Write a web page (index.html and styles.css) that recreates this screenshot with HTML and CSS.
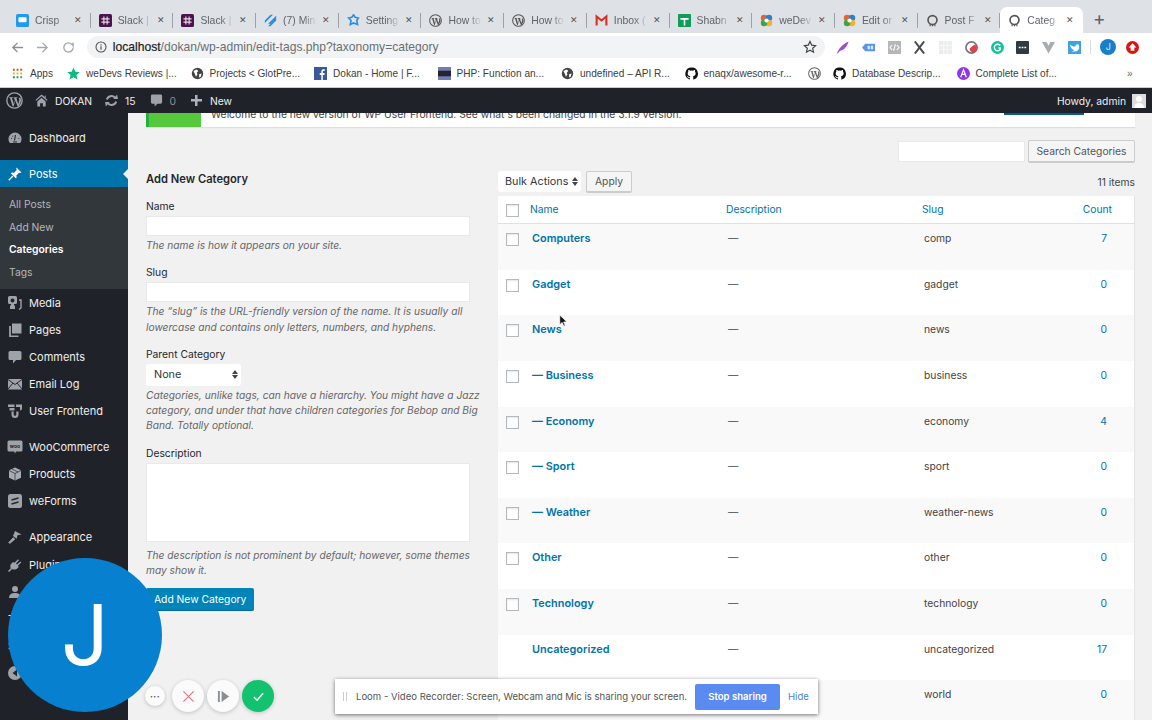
FILE: index.html
```html
<!DOCTYPE html>
<html lang="en">
   <head>
      <meta charset="UTF-8">
      <meta name="viewport" content="width=device-width, initial-scale=1.0">
      <title>Categories</title>
      <link rel="stylesheet" href="styles.css">
   </head>
   <body>
      <svg class="defs" xmlns="http://www.w3.org/2000/svg">
         <symbol id="wp" viewBox="0 0 20 20">
            <circle cx="10" cy="10" r="9" fill="none" stroke="currentColor" stroke-width="1.6"/>
            <path d="M3.800 6.200h4.200v.9H7l2.200 6.900 1.300-4-1-2.900H8.800v-.9h4.400v.9h-1l2.200 6.900 1-3.400c.5-1.600.2-2.700-.6-3.800h2.200c1.200 2.600.6 4.400-.2 6.500L14.600 17h-1l-2.500-6.700L8.800 17h-1L4.700 7.100H3.800z" fill="currentColor"/>
         </symbol>
         <symbol id="ring" viewBox="0 0 16 16">
            <circle cx="8" cy="7.500" r="5.500" fill="none" stroke="#555" stroke-width="2"/>
            <path d="M5 12.500v2.500M8 12.500v2.500M11 12.500v2.500" stroke="#555" stroke-width="1.400"/>
         </symbol>
         <symbol id="slack" viewBox="0 0 16 16">
            <rect width="16" height="16" rx="2" fill="#4a154b"/>
            <path d="M3 6h10M3 10h10M6 3v10M10 3v10" stroke="#e8d8e8" stroke-width="1.400"/>
         </symbol>
         <symbol id="wedevs" viewBox="0 0 16 16">
            <circle cx="5" cy="5" r="4" fill="#e8642c"/>
            <circle cx="11" cy="5" r="4" fill="#2f7fd1"/>
            <circle cx="11" cy="11" r="4" fill="#f0b429"/>
            <circle cx="5" cy="11" r="4" fill="#3fa34d"/>
            <circle cx="8" cy="8" r="2.600" fill="#fff"/>
         </symbol>
         <symbol id="github" viewBox="0 0 16 16">
            <path d="M8 .6a7.6 7.6 0 0 0-2.400 14.800c.4.100.5-.2.5-.4v-1.400c-2.100.5-2.600-.9-2.600-.9-.3-.9-.8-1.100-.8-1.100-.7-.5.100-.5.100-.5.8.100 1.200.8 1.200.8.700 1.200 1.800.8 2.200.6.100-.5.300-.8.500-1-1.700-.2-3.400-.8-3.400-3.700 0-.8.300-1.500.8-2-.1-.2-.3-1 .1-2 0 0 .6-.2 2.100.8a7 7 0 0 1 3.800 0c1.500-1 2.100-.8 2.100-.8.400 1 .2 1.800.1 2 .5.500.8 1.200.8 2 0 2.900-1.800 3.500-3.400 3.700.300.200.500.700.500 1.400V15c0 .2.100.5.500.4A7.600 7.600 0 0 0 8 .6z" fill="#111"/>
         </symbol>
         <symbol id="globe" viewBox="0 0 16 16">
            <circle cx="8" cy="8" r="7" fill="#444"/>
            <path d="M3 5l4-2 2 2-2 2 1 2-2 3-1-3zM10 9l3-1-1 4-2 1z" fill="#fff"/>
         </symbol>
      </svg>

      <div class="tabstrip">
         <div class="tab"><svg class="fav" viewBox="0 0 16 16"><rect width="16" height="16" rx="2" fill="#1e9bf0"/><rect x="3" y="4" width="10" height="6" rx="1" fill="#fff"/></svg><span class="tab-title">Crisp</span><span class="tab-x">✕</span></div>
         <div class="tab"><svg class="fav"><use href="#slack"/></svg><span class="tab-title">Slack |</span><span class="tab-x">✕</span></div>
         <div class="tab"><svg class="fav"><use href="#slack"/></svg><span class="tab-title">Slack |</span><span class="tab-x">✕</span></div>
         <div class="tab"><svg class="fav" viewBox="0 0 16 16"><path d="M1 8l7-7h3l-10 10zM5 12l10-10v3l-7 7zM5 15l10-10v3l-7 7z" fill="#2b8fe0"/></svg><span class="tab-title">(7) Min</span><span class="tab-x">✕</span></div>
         <div class="tab"><svg class="fav" viewBox="0 0 16 16"><path d="M8 1l2 3 4 1-2 3 1 5-5-2-4 2 1-5-3-3 4-1z" fill="none" stroke="#2b8fe0" stroke-width="2"/></svg><span class="tab-title">Setting</span><span class="tab-x">✕</span></div>
         <div class="tab"><svg class="fav wp-fav"><use href="#wp"/></svg><span class="tab-title">How to</span><span class="tab-x">✕</span></div>
         <div class="tab"><svg class="fav wp-fav"><use href="#wp"/></svg><span class="tab-title">How to</span><span class="tab-x">✕</span></div>
         <div class="tab"><svg class="fav" viewBox="0 0 16 16"><path d="M2 14V3l6 5 6-5v11" fill="none" stroke="#d93025" stroke-width="2.600"/></svg><span class="tab-title">Inbox (</span><span class="tab-x">✕</span></div>
         <div class="tab"><svg class="fav" viewBox="0 0 16 16"><rect width="16" height="16" rx="1" fill="#0f9d58"/><path d="M3 6h10M8 6v8" stroke="#fff" stroke-width="2"/></svg><span class="tab-title">Shabn</span><span class="tab-x">✕</span></div>
         <div class="tab"><svg class="fav"><use href="#wedevs"/></svg><span class="tab-title">weDev</span><span class="tab-x">✕</span></div>
         <div class="tab"><svg class="fav"><use href="#wedevs"/></svg><span class="tab-title">Edit or</span><span class="tab-x">✕</span></div>
         <div class="tab"><svg class="fav"><use href="#ring"/></svg><span class="tab-title">Post F</span><span class="tab-x">✕</span></div>
         <div class="tab tab-active"><svg class="fav"><use href="#ring"/></svg><span class="tab-title">Categ</span><span class="tab-x">✕</span></div>
         <span class="tab-new">+</span>
      </div>

      <div class="toolbar">
         <svg class="nav-icon" viewBox="0 0 14 14"><path d="M13 7H2M7 2L2 7l5 5" fill="none" stroke="#8a8e93" stroke-width="1.500"/></svg>
         <svg class="nav-icon dim" viewBox="0 0 14 14"><path d="M1 7h11M7 2l5 5-5 5" fill="none" stroke="#a6aaae" stroke-width="1.500"/></svg>
         <svg class="nav-icon dim" viewBox="0 0 14 14"><path d="M12 7a5 5 0 1 1-1.500-3.600L12 5V1.500" fill="none" stroke="#a6aaae" stroke-width="1.500"/></svg>
         <div class="omnibox">
            <svg class="info" viewBox="0 0 12 12"><circle cx="6" cy="6" r="5" fill="none" stroke="#555" stroke-width="1.100"/><path d="M6 5.300v3.400M6 3.200v1.200" stroke="#555" stroke-width="1.200"/></svg>
            <span class="url"><b>localhost</b>/dokan/wp-admin/edit-tags.php?taxonomy=category</span>
            <svg class="star" viewBox="0 0 14 14"><path d="M7 1.500l1.700 3.600 3.900.5-2.900 2.700.8 3.900L7 10.300l-3.500 1.900.8-3.900-2.900-2.700 3.900-.5z" fill="none" stroke="#444" stroke-width="1.200"/></svg>
         </div>
         <div class="extensions">
            <!-- feather, tag, code, x, grid, ring -->
            <svg class="ext" viewBox="0 0 14 14"><path d="M1 13.500C3 8 7.500 3 13.500.5 12.500 5 9.500 9.500 4.500 10.500L1.800 13.500z" fill="#a24ac9"/></svg>
            <svg class="ext" viewBox="0 0 14 14"><path d="M0 7l3.500-4H14v8H3.500z" fill="#5a93e8"/><path d="M6 5h2.500v4H6zM9.500 5H12v4H9.500z" fill="#dbe8fb"/></svg>
            <svg class="ext" viewBox="0 0 14 14"><rect width="14" height="14" fill="#b5b8bb"/><path d="M4.500 4.500L2 7l2.500 2.500M9.500 4.500L12 7 9.500 9.500M8 3.500L6 10.500" fill="none" stroke="#fff" stroke-width="1.100"/></svg>
            <svg class="ext" viewBox="0 0 14 14"><path d="M2 .5l10 13M12 .5L2 13.500" stroke="#4a4d50" stroke-width="2.200"/></svg>
            <svg class="ext" viewBox="0 0 14 14"><rect width="14" height="14" fill="#eceded"/><path d="M5 0v14M9 0v14M0 5h14M0 9h14" stroke="#fafafa"/></svg>
            <svg class="ext" viewBox="0 0 14 14"><circle cx="7" cy="7" r="6" fill="none" stroke="#777" stroke-width="1.800"/><path d="M5 8a4 4 0 0 0 8 0 4 3 0 0 0-3-4z" fill="#e0414e"/></svg>
            <svg class="ext" viewBox="0 0 14 14"><circle cx="7" cy="7" r="7" fill="#15c39a"/><path d="M10 5a3.500 3.500 0 1 0 0 4V7.500H8" fill="none" stroke="#fff" stroke-width="1.500"/></svg>
            <svg class="ext" viewBox="0 0 14 14"><rect width="14" height="14" rx="1" fill="#2e3b45"/><path d="M3 7h2M6 7h2M9 7h2" stroke="#fff" stroke-width="1.400"/></svg>
            <svg class="ext" viewBox="0 0 14 14"><path d="M0 1h5l2 4 2-4h5L7 13.500z" fill="#a9acaf"/></svg>
            <svg class="ext" viewBox="0 0 14 14"><rect width="14" height="14" fill="#3ba4e8"/><path d="M2 4c3 2 5 2 6 2 0-3 3-3 4-1v3c-1 3-4 4-8 3 2 0 2-1 3-1-3-1-4-3-5-6z" fill="#fff"/></svg>
            <span class="ext-sep"></span>
            <span class="ext-avatar">J</span>
            <svg class="ext ext-last" viewBox="0 0 14 14"><circle cx="7" cy="7" r="7" fill="#e01010"/><path d="M7 2.500L2.800 7H5v3.500h4V7h2.200z" fill="#fff"/></svg>
         </div>
      </div>

      <div class="bookmarks">
         <div class="bm bm-apps"><svg class="bm-icon" viewBox="0 0 12 12"><path d="M1 2h2M5 2h2M9 2h2" stroke="#e0452c" stroke-width="2.200"/><path d="M1 6h2M5 6h2M9 6h2" stroke="#f4b400" stroke-width="2.200"/><path d="M1 10h2M5 10h2" stroke="#0f9d58" stroke-width="2.200"/><path d="M9 10h2" stroke="#4285f4" stroke-width="2.200"/></svg>Apps</div>
         <div class="bm"><svg class="bm-icon" viewBox="0 0 14 14"><path d="M7 .5l2 4.500 4.800.5-3.600 3.200 1 4.800L7 11l-4.200 2.500 1-4.800L.2 5.500 5 5z" fill="#10b981"/></svg>weDevs Reviews |...</div>
         <div class="bm"><svg class="bm-icon"><use href="#globe"/></svg>Projects &lt; GlotPre...</div>
         <div class="bm"><svg class="bm-icon" viewBox="0 0 14 14"><rect width="14" height="14" fill="#3b5998"/><path d="M9.500 14V8.500h1.700l.3-2H9.500V5.200c0-.6.200-1 1-1h1V2.500c-1.800-.3-3.600 0-3.600 2.300v1.700H6.200v2h1.700V14z" fill="#fff"/></svg>Dokan - Home | F...</div>
         <div class="bm"><svg class="bm-icon" viewBox="0 0 14 14"><rect width="14" height="14" fill="#777bb3"/><rect y="4" width="14" height="6" fill="#232531"/></svg>PHP: Function an...</div>
         <div class="bm"><svg class="bm-icon"><use href="#globe"/></svg>undefined – API R...</div>
         <div class="bm"><svg class="bm-icon"><use href="#github"/></svg>enaqx/awesome-r...</div>
         <div class="bm bm-only"><svg class="bm-icon wp-bm"><use href="#wp"/></svg></div>
         <div class="bm"><svg class="bm-icon"><use href="#github"/></svg>Database Descrip...</div>
         <div class="bm"><svg class="bm-icon" viewBox="0 0 14 14"><circle cx="7" cy="7" r="7" fill="#9333ea"/><path d="M4 11l3-8 3 8M5 8h4" fill="none" stroke="#fff" stroke-width="1.300"/></svg>Complete List of...</div>
         <span class="bm-more">»</span>
      </div>

      <div class="adminbar">
         <svg class="ab-wp"><use href="#wp"/></svg>
         <svg class="ab-icon ab-home" viewBox="0 0 14 14"><path d="M7 .5L.5 6.500l.8.9L7 2.300l5.700 5.100.8-.9-2-1.800V1.500H10.800v1.700z" fill="#9ea3a8"/><path d="M2.500 8L7 4l4.500 4v5.500h-3V10h-3v3.500h-3z" fill="#9ea3a8"/></svg>
         <span class="ab-text ab-site">DOKAN</span>
         <svg class="ab-icon ab-updates" viewBox="0 0 14 14"><path d="M2 6a5 5 0 0 1 8.700-2M12 8a5 5 0 0 1-8.700 2" fill="none" stroke="#9ea3a8" stroke-width="2.200"/><path d="M9 5.500h5l-1-5zM5 8.500H0l1 5z" fill="#9ea3a8"/></svg>
         <span class="ab-text ab-count">15</span>
         <svg class="ab-icon ab-comment" viewBox="0 0 14 14"><path d="M2.500 .5h9A1.500 1.500 0 0 1 13 2v7a1.500 1.500 0 0 1-1.500 1.500H8L5 13.500v-3H2.500A1.500 1.500 0 0 1 1 9V2A1.500 1.500 0 0 1 2.500 .5z" fill="#9ea3a8"/></svg>
         <span class="ab-text ab-zero">0</span>
         <span class="ab-plus"></span>
         <span class="ab-text">New</span>
         <span class="ab-text ab-howdy">Howdy, admin</span>
         <svg class="ab-avatar" viewBox="0 0 14 14"><rect width="14" height="14" fill="#dcdcde"/><circle cx="7" cy="5" r="3" fill="#fff"/><path d="M2 14c0-4 3-5 5-5s5 1 5 5z" fill="#fff"/></svg>
      </div>

      <div class="wpwrap">
         <nav class="sidebar">
            <a class="menu-item"><svg class="mi" viewBox="0 0 14 14"><path d="M7 1.500a6.500 6.500 0 0 0-6.500 6.500c0 1.600.5 3 1.500 4h10c1-1 1.500-2.400 1.500-4A6.500 6.500 0 0 0 7 1.500z" fill="#9ea3a8"/><path d="M7.500 4l-1 5.500M3 7.500h.8M10.500 7.500h.8M4.500 4.800l.6.6M5 11h4" stroke="#23282d" stroke-width="1.100"/></svg>Dashboard</a>
            <a class="menu-item menu-current menu-gap"><svg class="mi" viewBox="0 0 14 14"><path d="M8.500.5l5 5-1.200.5-1.300-.3L8.300 8.500c.5 1.300.3 2.300-.3 3L2.800 6.200c.8-.6 1.800-.8 3-.3L8.700 3l-.4-1.400z" fill="#fff"/><path d="M4.800 9L.8 13.200" stroke="#fff" stroke-width="1.400"/></svg>Posts</a>
            <div class="submenu">
               <a class="sub-item">All Posts</a>
               <a class="sub-item">Add New</a>
               <a class="sub-item sub-current">Categories</a>
               <a class="sub-item">Tags</a>
            </div>
            <a class="menu-item"><svg class="mi" viewBox="0 0 14 14"><path d="M0 1.500A1.500 1.500 0 0 1 1.500 0h6A1.500 1.500 0 0 1 9 1.500v5A1.500 1.500 0 0 1 7.500 8H6v1.500H7V13H2V9.500H3V8H1.500A1.500 1.500 0 0 1 0 6.500zM4.500 2.500a2 2 0 1 0 0 4 2 2 0 0 0 0-4z" fill="#9ea3a8" fill-rule="evenodd"/><path d="M11 4h2v8l-2 1.500" fill="none" stroke="#9ea3a8" stroke-width="1.400"/></svg>Media</a>
            <a class="menu-item"><svg class="mi" viewBox="0 0 14 14"><path d="M4 .5h9.500v10H4z" fill="#9ea3a8"/><path d="M2 3v10.500h8.500" fill="none" stroke="#9ea3a8" stroke-width="1.800"/></svg>Pages</a>
            <a class="menu-item"><svg class="mi" viewBox="0 0 14 14"><path d="M2 1h10a1.500 1.500 0 0 1 1.500 1.500v6A1.500 1.500 0 0 1 12 10H8l-3 3.500V10H2A1.500 1.500 0 0 1 .5 8.500v-6A1.500 1.500 0 0 1 2 1z" fill="#9ea3a8"/></svg>Comments</a>
            <a class="menu-item"><svg class="mi" viewBox="0 0 14 14"><rect y="2" width="14" height="10.500" fill="#9ea3a8"/><path d="M0 2.500l7 5 7-5M0 12l5-6M14 12L9 6" fill="none" stroke="#23282d"/></svg>Email Log</a>
            <a class="menu-item"><svg class="mi" viewBox="0 0 14 14"><path d="M0 .5h6.500v2.500H0zM8 .5h6v4a2 2 0 0 1-2 2V3H8zM1.500 4h5v2.500h-5zM3.500 7.500v3a3.500 3.500 0 0 0 7 0v-3H8.300v3a1.300 1.300 0 0 1-2.600 0v-3z" fill="#9ea3a8"/></svg>User Frontend</a>
            <a class="menu-item menu-gap"><svg class="mi mi-woo" viewBox="0 0 16 14"><path d="M2 .5h12A1.500 1.500 0 0 1 15.500 2v8a1.500 1.500 0 0 1-1.500 1.500H9l-1 2-.8-2H2A1.500 1.500 0 0 1 .5 10V2A1.500 1.500 0 0 1 2 .5z" fill="#9ea3a8"/><text x="8" y="8" font-size="5" font-weight="700" text-anchor="middle" fill="#23282d">woo</text></svg>WooCommerce</a>
            <a class="menu-item"><svg class="mi" viewBox="0 0 14 14"><path d="M7 .5l6 2.700v7.600l-6 2.700-6-2.700V3.200z" fill="#a8adb2"/><path d="M1 3.500l6 3 6-3M7 6.500v7M4 2l6 3" fill="none" stroke="#23282d" stroke-width=".7"/></svg>Products</a>
            <a class="menu-item"><svg class="mi" viewBox="0 0 14 14"><rect width="14" height="14" rx="2.500" fill="#9ea3a8"/><path d="M3.500 6l7-2M3.500 10l7-2" stroke="#23282d" stroke-width="1.700"/></svg>weForms</a>
            <a class="menu-item menu-gap"><svg class="mi" viewBox="0 0 14 14"><path d="M7 1l6.500 3.500-4 .8-.9 3.400L5 6z" fill="#9ea3a8"/><path d="M5.500 7.500L.8 12.500l.9.9L7 9" fill="#9ea3a8" stroke="#9ea3a8"/></svg>Appearance</a>
            <a class="menu-item"><svg class="mi" viewBox="0 0 14 14"><path d="M3 6l2-2 1.500.7L10 1.200l1 1L8 5.500 9 6.500 12.500 3.500l.8 1L10 7.500l.7 1.500-2 2C6 12 4 11.500 3 10.500 2 9.500 2 7.500 3 6z" fill="#9ea3a8"/><path d="M3.500 10.500l-3 3" stroke="#9ea3a8" stroke-width="1.500"/></svg>Plugins</a>
            <a class="menu-item"><svg class="mi" viewBox="0 0 14 14"><circle cx="7" cy="4" r="3" fill="#9ea3a8"/><path d="M1 13c0-4 3-5 6-5s6 1 6 5z" fill="#9ea3a8"/></svg>Users</a>
            <a class="menu-item">Tools</a>
            <a class="menu-item">Settings</a>
            <a class="menu-item"><svg class="mi" viewBox="0 0 14 14"><circle cx="7" cy="7" r="7" fill="#9ea3a8"/><path d="M9 3.500L4.500 7 9 10.500z" fill="#23282d"/></svg>Collapse menu</a>
         </nav>

         <main class="content">
            <div class="notice">
               <span class="notice-logo"></span>
               <span class="notice-text">Welcome to the new version of WP User Frontend. See what's been changed in the 3.1.9 version.</span>
               <span class="notice-btn"></span>
            </div>

            <div class="search-row">
               <span class="search-input"></span>
               <span class="btn btn-search">Search Categories</span>
            </div>

            <div class="columns">
               <form class="form-col">
                  <h2 class="form-title">Add New Category</h2>
                  <label class="lbl">Name</label>
                  <span class="input"></span>
                  <p class="help">The name is how it appears on your site.</p>
                  <label class="lbl lbl-next">Slug</label>
                  <span class="input"></span>
                  <p class="help">The “slug” is the URL-friendly version of the name. It is usually all lowercase and contains only letters, numbers, and hyphens.</p>
                  <label class="lbl lbl-next">Parent Category</label>
                  <span class="select select-parent">None<i class="updown"></i></span>
                  <p class="help">Categories, unlike tags, can have a hierarchy. You might have a Jazz category, and under that have children categories for Bebop and Big Band. Totally optional.</p>
                  <label class="lbl lbl-next">Description</label>
                  <span class="textarea"></span>
                  <p class="help help-desc">The description is not prominent by default; however, some themes may show it.</p>
                  <span class="btn-primary">Add New Category</span>
               </form>

               <section class="table-col">
                  <div class="tablenav">
                     <span class="select select-bulk">Bulk Actions<i class="updown"></i></span>
                     <span class="btn btn-apply">Apply</span>
                     <span class="items">11 items</span>
                  </div>
                  <div class="table">
                     <div class="row row-head"><span class="cb"></span><a>Name</a><a>Description</a><a>Slug</a><a class="num">Count</a></div>
                     <div class="row"><span class="cb"></span><a class="name">Computers</a><span class="dash">—</span><span class="slug">comp</span><a class="num">7</a></div>
                     <div class="row"><span class="cb"></span><a class="name">Gadget</a><span class="dash">—</span><span class="slug">gadget</span><a class="num">0</a></div>
                     <div class="row"><span class="cb"></span><a class="name">News</a><span class="dash">—</span><span class="slug">news</span><a class="num">0</a></div>
                     <div class="row"><span class="cb"></span><a class="name">— Business</a><span class="dash">—</span><span class="slug">business</span><a class="num">0</a></div>
                     <div class="row"><span class="cb"></span><a class="name">— Economy</a><span class="dash">—</span><span class="slug">economy</span><a class="num">4</a></div>
                     <div class="row"><span class="cb"></span><a class="name">— Sport</a><span class="dash">—</span><span class="slug">sport</span><a class="num">0</a></div>
                     <div class="row"><span class="cb"></span><a class="name">— Weather</a><span class="dash">—</span><span class="slug">weather-news</span><a class="num">0</a></div>
                     <div class="row"><span class="cb"></span><a class="name">Other</a><span class="dash">—</span><span class="slug">other</span><a class="num">0</a></div>
                     <div class="row"><span class="cb"></span><a class="name">Technology</a><span class="dash">—</span><span class="slug">technology</span><a class="num">0</a></div>
                     <div class="row"><span></span><a class="name">Uncategorized</a><span class="dash">—</span><span class="slug">uncategorized</span><a class="num">17</a></div>
                     <div class="row"><span></span><a class="name">World</a><span class="dash">—</span><span class="slug">world</span><a class="num">0</a></div>
                  </div>
               </section>
            </div>
         </main>
      </div>

      <!-- loom overlays -->
      <div class="cam-bubble">J</div>
      <div class="rec-controls">
         <span class="rec-btn rec-more">•••</span>
         <span class="rec-btn"><svg viewBox="0 0 14 14" class="rec-svg"><path d="M1.500 1.500l11 11M12.500 1.500l-11 11" stroke="#e8788c" stroke-width="1.400"/></svg></span>
         <span class="rec-btn"><svg viewBox="0 0 14 14" class="rec-svg"><path d="M1 1h2v12H1zM5 1l8 6-8 6z" fill="#8a8f94"/></svg></span>
         <span class="rec-btn rec-done"><svg viewBox="0 0 14 14" class="rec-svg"><path d="M2 7.500L5.500 11 12 3.500" fill="none" stroke="#fff" stroke-width="1.600"/></svg></span>
      </div>
      <div class="loom-bar">
         <span class="grip"></span>
         <span class="loom-text">Loom - Video Recorder: Screen, Webcam and Mic is sharing your screen.</span>
         <span class="loom-stop">Stop sharing</span>
         <span class="loom-hide">Hide</span>
      </div>
      <svg class="cursor" viewBox="0 0 12 18"><path d="M1 1v13l3.200-3 2.200 5 2-.9-2.200-4.800H10.500z" fill="#111" stroke="#fff"/></svg>
   </body>
</html>
```

FILE: styles.css
```css
* {
    box-sizing: border-box;
}
html,
body {
    margin: 0;
    height: 720px;
    overflow: hidden;
}
body {
    font-family: "Inter", "Liberation Sans", sans-serif;
    font-size: 10.3px;
    color: #444;
    background: #f1f1f1;
}
.defs {
    display: none;
}

/* Browser chrome */
.tabstrip {
    height: 33px;
    background: #dee1e6;
    display: flex;
    padding: 7px 0 0 8px;
}
.tab {
    width: 82.7px;
    height: 26px;
    display: flex;
    align-items: center;
    padding-left: 8px;
    background: linear-gradient(#9da1a6, #9da1a6) right 6px / 1px 15px no-repeat;
    font-family: "Liberation Sans", sans-serif;
    font-size: 10.4px;
    color: #5f6368;
}
.tab-active {
    background: #fff;
    border-radius: 7px 7px 0 0;
}
.fav {
    width: 13px;
    height: 13px;
    flex: none;
    margin-right: 6px;
}
.wp-fav {
    color: #555;
}
.tab-title {
    width: 34px;
    white-space: nowrap;
    -webkit-mask-image: linear-gradient(90deg, #000 60%, transparent);
    mask-image: linear-gradient(90deg, #000 60%, transparent);
}
.tab-x {
    font-size: 9px;
    margin-left: 5px;
    color: #555;
}
.tab-new {
    margin-left: 10px;
    font-size: 19px;
    line-height: 24px;
    color: #5f6368;
}
.toolbar {
    height: 28px;
    background: #fff;
    display: flex;
    align-items: center;
    padding-left: 11px;
}
.nav-icon {
    width: 13px;
    height: 13px;
    margin-right: 12.500px;
}
.omnibox {
    width: 741px;
    height: 22px;
    margin-left: -0.500px;
    background: #f1f3f4;
    border-radius: 11px;
    display: flex;
    align-items: center;
    padding: 0 8px 0 8px;
    font-family: "Liberation Sans", sans-serif;
    font-size: 12.100px;
    color: #6b6f73;
}
.info {
    width: 12px;
    height: 12px;
    margin-right: 6px;
}
.url b {
    font-weight: 400;
    color: #202124;
    -webkit-text-stroke: 0.200px #202124;
}
.star {
    width: 14px;
    height: 14px;
    margin-left: auto;
}
.extensions {
    display: flex;
    align-items: center;
    padding-left: 11px;
}
.ext {
    width: 13px;
    height: 13px;
    margin-right: 12.700px;
}
.ext-sep {
    width: 1px;
    height: 14px;
    background: #dadce0;
    margin-right: 9px;
    margin-left: -3px;
}
.ext-avatar {
    width: 16px;
    height: 16px;
    border-radius: 50%;
    background: #1a7fcb;
    color: #dcebf7;
    text-align: center;
    font-size: 9px;
    line-height: 16px;
    margin-right: 10px;
}
.bookmarks {
    height: 27px;
    background: #fff;
    display: flex;
    align-items: center;
    padding: 0 0 2px 12px;
    border-bottom: 1px solid #c9cbcd;
    font-family: "Liberation Sans", sans-serif;
    font-size: 10.100px;
    color: #3c4043;
}
.bm {
    width: 123.500px;
    display: flex;
    align-items: center;
    white-space: nowrap;
    flex: none;
}
.bm-apps {
    width: 55px;
}
.bm-only {
    width: 25px;
}
.bm-icon {
    width: 13px;
    height: 13px;
    flex: none;
    margin-right: 6px;
}
.bm-apps .bm-icon {
    width: 11px;
    height: 11px;
    margin-right: 7px;
}
.wp-bm {
    color: #666;
}
.bm-more {
    margin-left: 47px;
    color: #666;
}

/* WP admin bar */
.adminbar {
    height: 25px;
    background: #1f2329;
    color: #eee;
    display: flex;
    align-items: center;
    padding: 0 6px 0 6px;
    position: relative;
    z-index: 2;
}
.ab-wp {
    width: 17px;
    height: 17px;
    color: #9ea3a8;
    margin-right: 12px;
}
.ab-icon {
    width: 13px;
    height: 13px;
}
.ab-home {
    margin-right: 7px;
}
.ab-text {
    font-size: 10.300px;
}
.ab-site {
    margin-right: 13px;
}
.ab-updates {
    margin-right: 7px;
}
.ab-count {
    margin-right: 14px;
}
.ab-comment {
    margin-right: 7px;
}
.ab-zero {
    color: #8a8f94;
    margin-right: 15px;
}
/* bar's plus sign, drawn with two gradients */
.ab-plus {
    width: 11px;
    height: 11px;
    margin-right: 8px;
    background:
        linear-gradient(#aeb2b6, #aeb2b6) center / 11px 2.500px no-repeat,
        linear-gradient(#aeb2b6, #aeb2b6) center / 2.500px 11px no-repeat;
}
.ab-howdy {
    margin-left: auto;
    margin-right: 6px;
}
.ab-avatar {
    width: 14px;
    height: 14px;
}

/* Layout below the bar */
.wpwrap {
    display: flex;
    height: 607px;
    overflow: hidden;
}

/* Admin menu */
.sidebar {
    width: 128px;
    flex: none;
    background: #1f2329;
    padding-top: 11px;
    color: #eee;
    font-size: 11px;
}
.menu-item {
    height: 27.100px;
    display: flex;
    align-items: center;
    padding-left: 8px;
    white-space: nowrap;
    position: relative;
}
.menu-gap {
    margin-top: 9px;
}
.mi {
    width: 14px;
    height: 14px;
    margin-right: 7px;
    flex: none;
}
.mi-woo {
    width: 16px;
    margin-left: -1px;
    margin-right: 6px;
}
.menu-current {
    background: #0073aa;
    color: #fff;
}
.menu-current::after {
    content: "";
    position: absolute;
    right: 0;
    top: 9px;
    border: 5px solid transparent;
    border-right-color: #f1f1f1;
    border-left-width: 0;
}
.submenu {
    background: #32373c;
    padding: 6px 0 6px;
    font-size: 10.300px;
}
.sub-item {
    display: block;
    height: 22.500px;
    line-height: 22.500px;
    padding-left: 9px;
    color: #b4b9be;
}
.sub-current {
    color: #fff;
    font-weight: 600;
}

/* Content */
.content {
    flex: 1;
    padding: 0 17px 0 18px;
    min-width: 0;
}
.notice {
    height: 44px;
    margin-top: -30px;
    background: #fff;
    display: flex;
    box-shadow: 0 1px 1px rgba(0, 0, 0, 0.08);
}
.notice-logo {
    width: 55px;
    height: 44px;
    flex: none;
    background: #56c83c;
    border-left: 3px solid #25b03c;
}
.notice-text {
    margin: 25px 0 0 10px;
    white-space: nowrap;
}
.notice-btn {
    width: 80px;
    height: 32px;
    margin-left: auto;
    margin-right: 51px;
    background: #005f8c;
}
.search-row {
    display: flex;
    justify-content: flex-end;
    align-items: center;
    gap: 3px;
    margin-top: 13px;
    height: 23px;
}
.search-input {
    width: 127px;
    height: 21px;
    background: #fff;
    border: 1px solid #e9e9e9;
}
.btn {
    display: inline-flex;
    align-items: center;
    justify-content: center;
    background: #f5f5f5;
    border: 1px solid #ccc;
    border-bottom-width: 2px;
    border-radius: 2px;
    color: #555;
}
.btn-search {
    width: 107px;
    height: 23px;
}
.columns {
    display: flex;
    gap: 28px;
    margin-top: 7px;
}

/* Add category form */
.form-col {
    width: 324px;
    flex: none;
    padding-top: 2px;
}
.form-title {
    margin: 0 0 14px;
    font-size: 11.200px;
    line-height: 14px;
    font-weight: 600;
    color: #23282d;
}
.lbl {
    display: block;
    line-height: 13px;
    color: #23282d;
}
.lbl-next {
    margin-top: 13px;
}
.input {
    display: block;
    height: 20px;
    margin-top: 3px;
    background: #fff;
    border: 1px solid #e9e9e9;
}
.help {
    margin: 2px -10px 0 0;
    font-size: 10.200px;
    line-height: 15.300px;
    font-style: italic;
    color: #666;
}
.help-desc {
    margin-top: 6px;
}
.select {
    display: flex;
    align-items: center;
    background: #fff;
    border-radius: 3px;
    color: #32373c;
    font-size: 10.800px;
    position: relative;
}
.select-parent {
    width: 95px;
    height: 22px;
    margin-top: 3px;
    padding-left: 8px;
}
.updown {
    position: absolute;
    right: 3px;
    top: 50%;
    width: 6px;
    height: 9px;
    margin-top: -4.500px;
}
.updown::before,
.updown::after {
    content: "";
    position: absolute;
    left: 0;
    border-left: 3px solid transparent;
    border-right: 3px solid transparent;
}
.updown::before {
    top: 0;
    border-bottom: 4px solid #444;
}
.updown::after {
    bottom: 0;
    border-top: 4px solid #444;
}
.textarea {
    display: block;
    height: 79px;
    margin-top: 3px;
    background: #fff;
    border: 1px solid #e9e9e9;
}
.btn-primary {
    display: inline-flex;
    align-items: center;
    height: 23px;
    width: 108px;
    margin-top: 10px;
    padding-left: 8px;
    background: #0085ba;
    border-bottom: 1px solid #006799;
    border-radius: 2px;
    color: #fff;
}

/* Categories table */
.table-col {
    flex: 1;
    min-width: 0;
}
.tablenav {
    display: flex;
    align-items: center;
    height: 23px;
    gap: 5px;
}
.select-bulk {
    width: 83px;
    height: 21px;
    padding-left: 7px;
}
.btn-apply {
    width: 46px;
    height: 22px;
}
.items {
    margin-left: auto;
}
.table {
    margin-top: 3px;
    box-shadow: 0 1px 1px rgba(0, 0, 0, 0.04);
}
.row {
    display: grid;
    grid-template-columns: 34px 194px 196px 140px 45px;
    height: 45.600px;
    padding-top: 7px;
    background: #fff;
    line-height: 15px;
    border-right: 1px solid #e5e5e5;
}
.row:nth-child(even) {
    background: #f9f9f9;
}
.row a {
    color: #0073aa;
}
.row-head {
    height: 28.300px;
    padding-top: 6px;
    grid-template-columns: 32px 196px 196px 143px 47px;
    border-bottom: 1px solid #e1e1e1;
}
.cb {
    width: 13px;
    height: 13px;
    margin-left: 8px;
    background: #fff;
    border: 1px solid #b4b9be;
    box-shadow: inset 0 1px 2px rgba(0, 0, 0, 0.1);
    margin-top: 2px;
}
.row .name {
    font-weight: 600;
    font-size: 10.900px;
}
.dash {
    margin-left: 2px;
}
.slug {
    margin-left: 2px;
}
.num {
    text-align: right;
}

/* Loom overlays */
.cam-bubble {
    position: absolute;
    left: 8px;
    top: 558px;
    width: 154px;
    height: 154px;
    border-radius: 50%;
    background: #0680cf;
    color: #fff;
    font-size: 84px;
    font-weight: 400;
    line-height: 154px;
    text-align: center;
    z-index: 5;
}
.rec-controls {
    position: absolute;
    left: 145px;
    top: 680px;
    display: flex;
    align-items: center;
    gap: 3px;
    z-index: 6;
}
.rec-btn {
    width: 32px;
    height: 32px;
    border-radius: 50%;
    background: #fbfbfb;
    box-shadow: 0 1px 4px rgba(0, 0, 0, 0.2);
    display: flex;
    align-items: center;
    justify-content: center;
}
.rec-more {
    width: 20px;
    height: 20px;
    margin-right: 4px;
    font-size: 5px;
    letter-spacing: 0.500px;
    color: #555;
}
.rec-svg {
    width: 13px;
    height: 13px;
}
.rec-done {
    background: #12c26e;
}
.loom-bar {
    position: absolute;
    left: 335px;
    top: 679px;
    width: 483px;
    height: 35px;
    background: rgba(255, 255, 255, 0.97);
    box-shadow: 0 1px 4px rgba(0, 0, 0, 0.55);
    display: flex;
    align-items: center;
    padding-left: 8px;
    font-size: 9.550px;
    color: #555;
    z-index: 4;
}
.grip {
    width: 4px;
    height: 9px;
    border-left: 1px solid #ccc;
    border-right: 1px solid #ccc;
    margin-right: 9px;
}
.loom-text {
    white-space: nowrap;
    width: 330px;
}
.loom-stop {
    width: 85px;
    height: 26px;
    margin-left: 9px;
    background: #5a8bf0;
    border-radius: 2px;
    color: #fff;
    font-weight: 600;
    display: flex;
    align-items: center;
    justify-content: center;
}
.loom-hide {
    margin-left: 8px;
    color: #4f7fe0;
}
.cursor {
    position: absolute;
    left: 559px;
    top: 314px;
    width: 9px;
    height: 14px;
    z-index: 3;
}
```
